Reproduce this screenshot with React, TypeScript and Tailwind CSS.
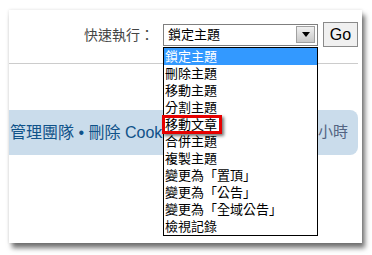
import React from "react";

const items = [
  "鎖定主題",
  "刪除主題",
  "移動主題",
  "分割主題",
  "移動文章",
  "合併主題",
  "複製主題",
  "變更為「置頂」",
  "變更為「公告」",
  "變更為「全域公告」",
  "檢視記錄",
];

export default function App() {
  return (
    <div
      className="w-[372px] h-[255px] bg-white overflow-hidden pt-[10px] pl-[9px]"
      style={{ fontFamily: '"Liberation Sans", "Noto Sans CJK TC", sans-serif' }}
    >
      <div className="w-[353px] h-[233px] bg-white flex flex-col shadow-[3px_5px_5px_rgba(0,0,0,0.55),0_0_3px_rgba(0,0,0,0.12)]">
        <div className="mt-[12px] h-[25px] flex items-center justify-end pr-[4px]">
          <span className="text-[14px] leading-none text-[#444] mr-[9px]">快速執行：</span>
          <div className="relative w-[155px] h-[22px] border border-[#7f7f7f] bg-white flex items-center">
            <span className="text-[13px] leading-none text-black pl-[4px] flex-1">鎖定主題</span>
            <div className="w-[19px] h-[17px] mr-[2px] border border-[#a0a0a0] bg-gradient-to-b from-[#f0f0f0] to-[#c8c8c8] flex items-center justify-center">
              <div className="w-0 h-0 border-l-[4px] border-r-[4px] border-t-[5px] border-l-transparent border-r-transparent border-t-black" />
            </div>
            <div className="absolute left-[-1px] top-[22px] w-[155px] border border-black bg-white z-10">
              {items.map((t, i) => (
                <div
                  key={t}
                  className={
                    "h-[17px] leading-[17px] text-[13px] pl-[1px] whitespace-nowrap " +
                    (i === 0 ? "bg-[#3399ff] text-white" : "text-black")
                  }
                >
                  {t}
                </div>
              ))}
              <div className="absolute left-[-2px] top-[67px] w-[60px] h-[19px] border-[3px] border-[#e60000] shadow-[2px_2px_3px_rgba(0,0,0,0.55)]" />
            </div>
          </div>
          <button className="ml-[5px] w-[35px] h-[25px] border border-[#8a8a8a] bg-[#f0f0f0] text-[16px] leading-none text-black">
            Go
          </button>
        </div>
        <div className="mt-[16px] mr-[4px] h-px bg-[#cccccc]" />
        <div className="mt-[46px] mr-[4px] h-[45px] bg-[#cadceb] rounded-r-[8px] flex items-center justify-between pr-[10px]">
          <span className="text-[16px] text-[#105289] whitespace-nowrap pl-[1px]">
            管理團隊 • 刪除 Cookies
          </span>
          <span className="text-[15px] text-[#536482]">小時</span>
        </div>
      </div>
    </div>
  );
}
